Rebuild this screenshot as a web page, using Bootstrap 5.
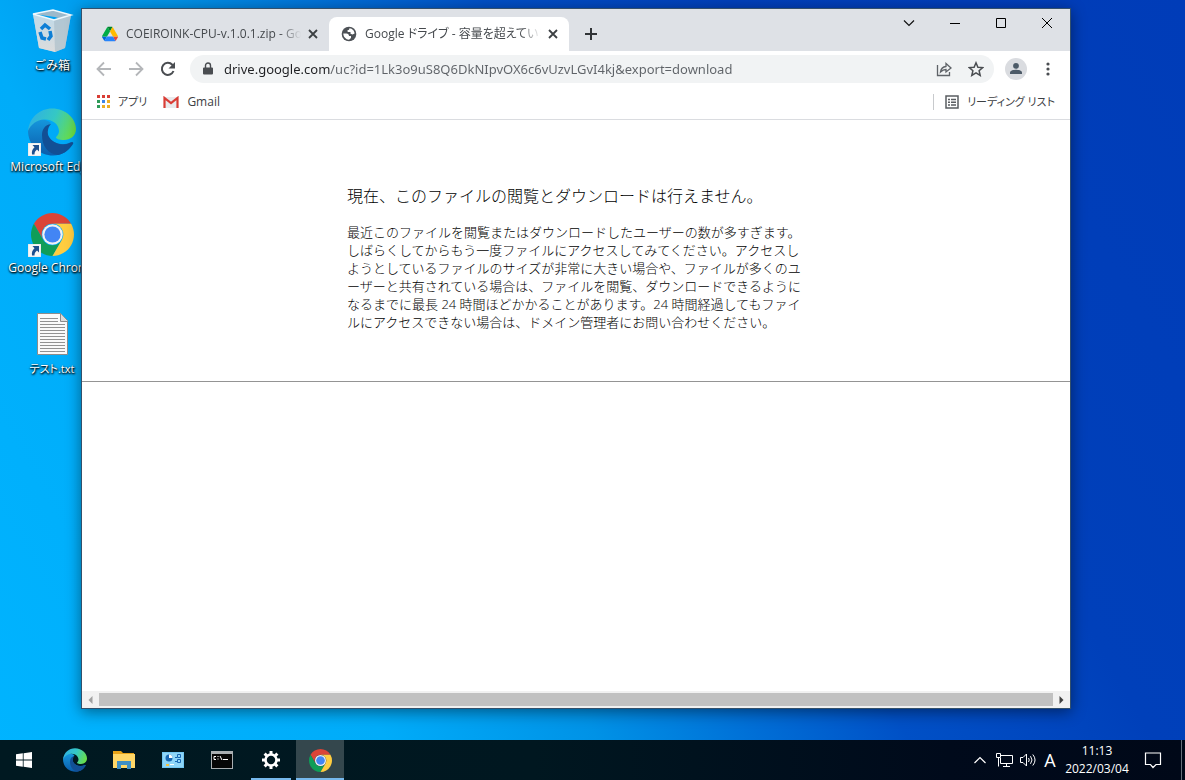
<!DOCTYPE html>
<html lang="ja">
<head>
<meta charset="utf-8">
<meta name="viewport" content="width=device-width, initial-scale=1">
<title>Google ドライブ - 容量を超えています</title>
<link href="https://cdn.jsdelivr.net/npm/bootstrap@5.3.0/dist/css/bootstrap.min.css" rel="stylesheet">
<style>
  body { font-family: "Open Sans", "Noto Sans CJK JP", sans-serif; font-size: 12px; line-height: 18px; color: #202124; }
  button, a { color: inherit; }
  .desktop { background: linear-gradient(60deg, #00b4ff 0%, #00acf9 25%, #0092e6 38%, #006ed6 48%, #0050c6 57%, #0040ba 72%, #003cb8 100%); }
  .plain { background: none; border: 0; padding: 0; display: flex; align-items: center; justify-content: center; flex: none; text-decoration: none; }

  /* desktop icons */
  .shortcuts { width: 104px; padding-top: 7px; }
  .shortcut { height: 101px; flex-direction: column; justify-content: flex-start; color: #fff; white-space: nowrap; line-height: 20px; gap: 1px; text-shadow: 1px 1px 2px #000, 0 1px 2px #000; }
  .kana { font-size: 11px; font-feature-settings: "palt"; }

  /* browser window */
  .browser { position: absolute; top: 8px; left: 81px; right: 114px; bottom: 31px; border: 1px solid #33506b; box-shadow: 0 3px 14px rgba(0,0,0,.45); }
  .tabstrip { background: #dee1e6; height: 42px; padding-left: 8px; }
  .tab-item { width: 240px; height: 34px; padding: 0 8px 0 12px; color: #45494d; gap: 4px; }
  .tab-item:first-child { width: 239px; }
  .tab-item.current { background: #fff; border-radius: 8px 8px 0 0; }
  .tab-title { font-feature-settings: "palt"; -webkit-mask-image: linear-gradient(90deg, #000 88%, transparent); mask-image: linear-gradient(90deg, #000 88%, transparent); }
  .close-btn { width: 16px; height: 16px; }
  .wc { width: 46px; height: 28px; }
  .toolbar { height: 36px; padding: 0 6px; }
  .tool { width: 32px; height: 32px; }
  .omnibox { background: #f1f3f4; height: 28px; border-radius: 14px; margin: 0 6px; padding: 0 2px 0 12px; gap: 10px; }
  .omnibox input { border: 0; outline: 0; padding: 0; font-family: "Noto Sans", sans-serif; font-size: 13px; color: transparent; background: linear-gradient(90deg, #202124 106px, #5f6368 106px); -webkit-background-clip: text; background-clip: text; }
  .avatar { width: 22px; height: 22px; border-radius: 50%; background: #dadce0; margin: 0 5px; }
  .bookmarks { height: 33px; padding: 0 15px 3px; border-bottom: 1px solid #dadce0; color: #3c4043; }
  .divider { width: 1px; height: 16px; background: #c8cacd; margin-right: 11px; }
  .notice { width: 460px; margin-left: 265px; padding-top: 64px; height: 261px; color: #000; font-weight: 300; }
  .notice h1 { font-size: 16px; line-height: 24px; font-weight: 300; margin: 0 0 15px; }
  .notice p { font-size: 13px; line-height: 18px; margin: 0; }
  .rule { height: 1px; background: #949494; }
  .scroller { height: 17px; background: #f1f1f1; }
  .thumb { height: 13px; background: #c1c1c1; }
  .arrow { width: 17px; height: 17px; }

  /* taskbar */
  .taskbar { height: 40px; background: linear-gradient(90deg, #001921 0%, #001720 45%, #000a1b 80%, #000818 100%); color: #fff; }
  .task { width: 48px; height: 40px; }
  .pinned { margin-left: 3px; column-gap: 1px; }
  .task.open { background: linear-gradient(#76b9ed, #76b9ed) bottom/40px 2px no-repeat; }
  .task.active { background: linear-gradient(#76b9ed, #76b9ed) bottom/100% 2px no-repeat #34474d; }
  .tray { width: 24px; height: 40px; }
  .ime { width: 20px; font-size: 18px; margin-right: 5px; }
  .clock { width: 64px; flex-direction: column; }
  .peek { width: 4px; height: 40px; border-left: 1px solid #66707a; }
</style>
</head>
<body class="vh-100 d-flex flex-column overflow-hidden desktop">

<svg class="position-absolute" width="0" height="0" aria-hidden="true">
  <defs>
    <linearGradient id="edgeTop" x1="0" y1=".3" x2="1" y2=".6"><stop offset="0" stop-color="#2fb0e4"/><stop offset=".5" stop-color="#35c8c4"/><stop offset="1" stop-color="#6adf45"/></linearGradient>
    <linearGradient id="edgeBlue" x1="0" y1="0" x2="0" y2="1"><stop offset="0" stop-color="#1597dd"/><stop offset="1" stop-color="#0b5cab"/></linearGradient>
    <linearGradient id="binFace" x1="0" y1="0" x2="0" y2="1"><stop offset="0" stop-color="#bfd9e8"/><stop offset="1" stop-color="#dcdcdc"/></linearGradient>
  </defs>
  <symbol id="edge" viewBox="0 0 48 48">
    <path fill="url(#edgeBlue)" d="M0 22C0 38 12 47.500 25 47.500C34 47.500 40 43 44.500 36C46 34 44 33.500 42 34.500C36 37.500 26 36 21.500 30C17 24 19 18 23 15C14 8 4 11 0 22Z"/>
    <path fill="#124f95" d="M14 27C14 38 20 46 30 47C37 45.500 42 41 45 36C46 34.400 44.500 33.700 43 34.500C34 39 24 35 20.500 28C19 24 20 19 23 16C17 17 14 21 14 27Z"/>
    <path fill="url(#edgeTop)" d="M0 23C1.500 9 12 .5 24 .5C38 .5 48 11 48 21C48 28 42 32 36 32C31 32 28 30.500 28 29.500C28 28.500 31 27 31 23C31 17 25 11 16 11.500C9 12 3 16 0 23Z"/>
  </symbol>
  <symbol id="chrome" viewBox="2 2 44 44">
    <path fill="#db4437" d="M4.950 13A22 22 0 0 1 43.050 13L24 13A11 11 0 0 0 14.470 29.500Z"/>
    <path fill="#0f9d58" d="M4.950 13L14.470 29.500A11 11 0 0 0 33.530 29.500L24 46A22 22 0 0 1 4.950 13Z"/>
    <path fill="#ffcd40" d="M43.050 13A22 22 0 0 1 24 46L33.530 29.500A11 11 0 0 0 24 13Z"/>
    <circle cx="24" cy="24" r="10.500" fill="#f1f1f1"/><circle cx="24" cy="24" r="8.300" fill="#4285f4"/>
  </symbol>
  <symbol id="link" viewBox="0 0 13 13">
    <path fill="#f7f7f7" stroke="#ccc" stroke-width=".5" d="M0 0h13v13H0z"/><path fill="#1d4f8f" d="M4.500 2H11v6.500L9 6.500C7 8 6.500 9.500 6.500 11.500H4C3.500 8.500 4.500 6 6.500 4.300Z"/>
  </symbol>
  <symbol id="cross" viewBox="0 0 16 16"><path d="M4 4l8 8M12 4l-8 8" stroke="#3c4043" stroke-width="1.800"/></symbol>
</svg>

<main class="position-relative flex-grow-1">
  <nav class="shortcuts d-flex flex-column" aria-label="デスクトップ">
    <a href="#" class="shortcut plain">
      <svg width="48" height="48" viewBox="0 0 48 48"><path fill="#9bb9cb" d="M5 7L25 3L43 8L39 14L27 10Z"/><path fill="#bcd3e0" d="M5 7L26 13L28 45L11 41Z"/><path fill="url(#binFace)" d="M5 7L26 13L43 8L37 41L27 45L11 41Z"/><path fill="#a7bac7" opacity=".6" d="M26 13L43 8L37 41L27 45Z"/><path fill="none" stroke="#eef8fd" stroke-width="1.500" d="M5 7L25 3L43 8L26 13Z"/><g fill="none" stroke="#0d7fd6" stroke-width="3.500"><path d="M13 22l4-4l5 4"/><path d="M12 25l2 6l4 1"/><path d="M22 24l1 5l-3 4"/></g></svg>
      <span>ごみ箱</span>
    </a>
    <a href="#" class="shortcut plain">
      <svg width="48" height="48"><use href="#edge"/><use href="#link" y="35" width="13" height="13"/></svg>
      <span>Microsoft Edge</span>
    </a>
    <a href="#" class="shortcut plain">
      <svg width="48" height="48"><use href="#chrome" x="3" y="4" width="43" height="43"/><use href="#link" y="35" width="13" height="13"/></svg>
      <span>Google Chrome</span>
    </a>
    <a href="#" class="shortcut plain">
      <svg width="48" height="48" viewBox="0 0 48 48"><path fill="#fafafa" stroke="#8c8c8c" d="M9.500 3.500h23l7 7v34h-30z"/><path fill="#dcdcdc" stroke="#8c8c8c" d="M32.500 3.500v8h7"/><path stroke="#929292" d="M12 8.500h18M12 11.500h18M12 14.500h25M12 17.500h25M12 20.500h25M12 23.500h25M12 26.500h25M12 29.500h25M12 32.500h25M12 35.500h25M12 38.500h25M12 41.500h25"/></svg>
      <span class="kana">テスト.txt</span>
    </a>
  </nav>

  <section class="browser bg-white d-flex flex-column">
    <header class="tabstrip d-flex align-items-end">
      <div class="tab-item d-flex align-items-center">
        <svg class="flex-shrink-0 me-1" width="16" height="16" viewBox="0 0 87.300 78"><path fill="#0066da" d="m6.600 66.850 3.850 6.650c.8 1.400 1.950 2.500 3.300 3.300L27.500 53H0c0 1.550.4 3.100 1.200 4.500z"/><path fill="#00ac47" d="M43.650 25 29.900 1.200c-1.350.8-2.500 1.900-3.300 3.300L1.200 48.500A9 9 0 0 0 0 53h27.500z"/><path fill="#ea4335" d="M73.550 76.800c1.350-.8 2.500-1.900 3.300-3.300l1.600-2.750L86.100 57.500c.8-1.400 1.200-2.950 1.200-4.500H59.800l5.850 11.500z"/><path fill="#00832d" d="M43.650 25 57.400 1.200C56.050.4 54.500 0 52.900 0H34.400c-1.600 0-3.150.45-4.500 1.200z"/><path fill="#2684fc" d="M59.800 53H27.500L13.750 76.800c1.350.8 2.900 1.200 4.500 1.200h50.800c1.600 0 3.150-.45 4.500-1.200z"/><path fill="#ffba00" d="M73.400 26.500 60.700 4.500c-.8-1.400-1.950-2.500-3.300-3.300L43.650 25 59.800 53h27.450c0-1.550-.4-3.100-1.200-4.500z"/></svg>
        <span class="tab-title flex-fill overflow-hidden text-nowrap">COEIROINK-CPU-v.1.0.1.zip - Google ドライブ</span>
        <button class="plain close-btn" aria-label="タブを閉じる"><svg width="16" height="16"><use href="#cross"/></svg></button>
      </div>
      <div class="tab-item current d-flex align-items-center">
        <svg class="flex-shrink-0 me-1" width="16" height="16" viewBox="0 0 16 16"><circle cx="8" cy="8" r="7.300" fill="#4d5156"/><path fill="#fff" d="M8.500 2.200C11.500 2.500 13.500 5 13.600 7.500L11.500 8.500L9.500 7.700V6H6.800L6.300 4.500L8 3.700ZM2.300 7.500H5.500C7 7.500 8 8.500 8 10H10V12L8 13.700C5 13.600 2.300 11 2.300 7.500Z"/></svg>
        <span class="tab-title flex-fill overflow-hidden text-nowrap">Google ドライブ - 容量を超えています</span>
        <button class="plain close-btn" aria-label="タブを閉じる"><svg width="16" height="16"><use href="#cross"/></svg></button>
      </div>
      <button class="plain ms-2 align-self-end" aria-label="新しいタブ"><svg width="28" height="34" viewBox="0 0 28 34"><path d="M8 17h12M14 11v12" stroke="#303336" stroke-width="2"/></svg></button>
      <div class="ms-auto d-flex align-self-start">
        <button class="plain wc" aria-label="タブを検索"><svg width="12" height="12" fill="none" stroke="#111" stroke-width="1.200"><path d="M1 3.500l5 5l5-5"/></svg></button>
        <button class="plain wc" aria-label="最小化"><svg width="12" height="12" stroke="#000"><path d="M1 6.500h10"/></svg></button>
        <button class="plain wc" aria-label="最大化"><svg width="12" height="12" fill="none" stroke="#000"><path d="M1.500 1.500h9v9h-9z"/></svg></button>
        <button class="plain wc" aria-label="閉じる"><svg width="12" height="12" stroke="#000"><path d="M1 1l10 10M11 1L1 11"/></svg></button>
      </div>
    </header>

    <div class="toolbar d-flex align-items-center">
      <button class="plain tool" aria-label="戻る"><svg width="16" height="16" fill="none" stroke="#b4b6b9" stroke-width="1.800"><path d="M15 8H2M8 1.500L1.500 8L8 14.500"/></svg></button>
      <button class="plain tool" aria-label="進む"><svg width="16" height="16" fill="none" stroke="#b4b6b9" stroke-width="1.800"><path d="M1 8h13M8 1.500L14.500 8L8 14.500"/></svg></button>
      <button class="plain tool" aria-label="再読み込み"><svg width="16" height="16" fill="none" stroke="#4a4d51" stroke-width="2"><path d="M13.500 10A6 6 0 1 1 12.300 3.800L14 5.500"/><path fill="#4a4d51" stroke="none" d="M15 1v6.500H8.500Z"/></svg></button>
      <div class="omnibox d-flex align-items-center flex-fill">
        <svg width="12" height="14" viewBox="0 0 12 14"><path fill="#4a4d51" d="M2 5.500h8a1 1 0 0 1 1 1v5a1 1 0 0 1-1 1H2a1 1 0 0 1-1-1v-5a1 1 0 0 1 1-1z"/><path fill="none" stroke="#4a4d51" stroke-width="1.400" d="M3.500 6V3.500a2.500 2.500 0 0 1 5 0V6"/></svg>
        <input class="flex-fill" type="text" aria-label="アドレスバー" value="drive.google.com/uc?id=1Lk3o9uS8Q6DkNIpvOX6c6vUzvLGvI4kj&amp;export=download">
        <div class="d-flex">
          <button class="plain tool" aria-label="共有"><svg width="16" height="16" fill="none" stroke="#5f6368" stroke-width="1.300"><path d="M1.500 4v10.500h12V11"/><path d="M4.500 11C5 7.500 7 5.700 10 5.500V2.500L15 7L10 11V8.500C7.500 8.500 6 9.500 4.500 11Z"/></svg></button>
          <button class="plain tool" aria-label="ブックマークに追加"><svg width="16" height="16" fill="none" stroke="#4a4d51" stroke-width="1.500"><path d="M8 1.800l1.900 4.400l4.800.4l-3.600 3.100l1.100 4.700L8 11.900l-4.200 2.500l1.100-4.700L1.300 6.600l4.800-.4z"/></svg></button>
        </div>
      </div>
      <button class="plain tool" aria-label="プロフィール"><span class="avatar d-flex align-items-center justify-content-center"><svg width="14" height="14" fill="#4c5a67"><circle cx="7" cy="3.800" r="2.900"/><path d="M1 12V10.500C1 8.500 5 7.800 7 7.800S13 8.500 13 10.500V12Z"/></svg></span></button>
      <button class="plain tool" aria-label="メニュー"><svg width="4" height="16" fill="#4a4d51"><circle cx="2" cy="3" r="1.600"/><circle cx="2" cy="8" r="1.600"/><circle cx="2" cy="13" r="1.600"/></svg></button>
    </div>

    <nav class="bookmarks d-flex align-items-center" aria-label="ブックマーク">
      <a href="#" class="plain gap-2 me-3"><svg width="13" height="13" viewBox="0 0 13 13"><path fill="#d93d35" d="M0 0h3v3H0zM5 0h3v3H5zM10 0h3v3h-3z"/><path fill="#2e9b58" d="M0 5h3v3H0z"/><path fill="#3c85e8" d="M5 5h3v3H5z"/><path fill="#ecae25" d="M10 5h3v3h-3zM5 10h3v3H5zM10 10h3v3h-3z"/><path fill="#2e9b58" d="M0 10h3v3H0z"/></svg><span class="kana">アプリ</span></a>
      <a href="#" class="plain gap-2"><svg width="16" height="12" viewBox="0 0 16 12"><path fill="#e9eaec" d="M2 1h12v11H2z"/><path fill="none" stroke="#d93d35" stroke-width="2.200" d="M1.500 12V2L8 7.200L14.500 2V12"/></svg><span>Gmail</span></a>
      <span class="divider ms-auto"></span>
      <a href="#" class="plain gap-2"><svg width="14" height="14" fill="none" stroke="#5a5d61" stroke-width="1.500"><path d="M1 1h12v12H1z"/><path d="M3 4.500h2M6 4.500h5M3 7.200h2M6 7.200h5M3 10h2M6 10h5"/></svg><span class="kana">リーディング リスト</span></a>
    </nav>

    <article class="notice">
      <h1>現在、このファイルの閲覧とダウンロードは行えません。</h1>
      <p>最近このファイルを閲覧またはダウンロードしたユーザーの数が多すぎます。しばらくしてからもう一度ファイルにアクセスしてみてください。アクセスしようとしているファイルのサイズが非常に大きい場合や、ファイルが多くのユーザーと共有されている場合は、ファイルを閲覧、ダウンロードできるようになるまでに最長 24 時間ほどかかることがあります。24 時間経過してもファイルにアクセスできない場合は、ドメイン管理者にお問い合わせください。</p>
    </article>
    <div class="rule"></div>

    <div class="scroller d-flex align-items-center mt-auto">
      <button class="plain arrow" aria-label="左へ"><svg width="5" height="8"><path fill="#a0a0a0" d="M4.500 0v8L.5 4z"/></svg></button>
      <div class="thumb flex-fill"></div>
      <button class="plain arrow" aria-label="右へ"><svg width="5" height="8"><path fill="#404040" d="M.5 0v8L4.500 4z"/></svg></button>
    </div>
  </section>
</main>

<footer class="taskbar d-flex flex-shrink-0">
  <button class="plain task" aria-label="スタート"><svg width="16" height="16" fill="#fff"><path d="M0 2.300L6.800 1.300V7.600H0ZM7.600 1.200L16 0V7.600H7.600ZM0 8.400H6.800V14.700L0 13.700ZM7.600 8.400H16V16L7.600 14.800Z"/></svg></button>
  <div class="pinned d-flex">
    <button class="plain task" aria-label="Microsoft Edge"><svg width="24" height="24"><use href="#edge"/></svg></button>
    <button class="plain task" aria-label="エクスプローラー"><svg width="22" height="20" viewBox="0 0 22 20"><path fill="#e8a317" d="M0 1h8l2 2h11v4H0z"/><path fill="#ffd767" d="M0 4h22v14H0z"/><path fill="#3f8fc4" d="M4 11h14v8h-4v-4H8v4H4z"/></svg></button>
    <button class="plain task" aria-label="システム"><svg width="22" height="16" viewBox="0 0 22 16"><path fill="#73c7f3" d="M0 0h22v16H0z"/><path fill="#8fd6f8" d="M1 1h20v14H1z"/><circle cx="7" cy="6" r="3.500" fill="#1767b4"/><path fill="#fff" d="M7 6V2.500A3.500 3.500 0 0 1 10.500 6z"/><path fill="#f3c343" d="M4 12h3v2H4z"/><path fill="#fff" d="M8 12h4v1H8z"/><path fill="none" stroke="#1767b4" d="M13 5.500h2M13 9.500h2M15.500 2.500h3v3h-3zM15.500 7.500h3v3h-3z"/></svg></button>
    <button class="plain task" aria-label="コマンド プロンプト"><svg width="22" height="18" viewBox="0 0 22 18"><path fill="#a9aeb1" d="M0 0h22v18H0z"/><path fill="#060606" d="M1 3h20v14H1z"/><path fill="none" stroke="#fff" d="M5 5.500H3v3h2M7 5v1M7 7.500v1M9 5l2 4M12 8.500h5"/></svg></button>
    <button class="plain task open" aria-label="設定"><svg width="20" height="20" viewBox="0 0 20 20" fill="none" stroke="#fff"><circle cx="10" cy="10" r="5.500" stroke-width="2.600"/><path stroke-width="3" d="M10 1v3M10 16v3M1 10h3M16 10h3M3.600 3.600l2.200 2.200M14.200 14.200l2.200 2.200M3.600 16.400l2.200-2.200M14.200 5.800l2.200-2.200"/></svg></button>
    <button class="plain task active" aria-label="Google Chrome"><svg width="23" height="23"><use href="#chrome"/></svg></button>
  </div>
  <div class="d-flex ms-auto">
    <button class="plain tray" aria-label="隠れているインジケーター"><svg width="14" height="14" fill="none" stroke="#fff" stroke-width="1.200"><path d="M1.500 10L7 4.500L12.500 10"/></svg></button>
    <button class="plain tray" aria-label="ネットワーク"><svg width="17" height="14" fill="none" stroke="#fff"><path d="M5 2.500h11.500v8H4.500V5M.5 .5h4v4h-4zM2.500 4.500v9M10.500 10.500v3M7 13.500h7"/></svg></button>
    <button class="plain tray" aria-label="音量"><svg width="17" height="14" fill="none" stroke="#fff"><path d="M.5 4.500H3L6.500 1v12L3 9.500H.5zM8.500 5q1.500 2 0 4M10.500 3.200q3 3.800 0 7.600M12.800 1.500q4.500 5.500 0 11"/></svg></button>
    <button class="plain ime" aria-label="入力モード">A</button>
    <time class="plain clock" datetime="2022-03-04T11:13"><span>11:13</span><span>2022/03/04</span></time>
    <button class="plain task me-1" aria-label="通知"><svg width="18" height="18" fill="none" stroke="#fff" stroke-width="1.200"><path d="M1.500 2h15v11.500h-4.500L9 16.500L6.500 13.500h-5z"/></svg></button>
    <span class="peek"></span>
  </div>
</footer>

<script src="https://cdn.jsdelivr.net/npm/bootstrap@5.3.0/dist/js/bootstrap.bundle.min.js"></script>
</body>
</html>
